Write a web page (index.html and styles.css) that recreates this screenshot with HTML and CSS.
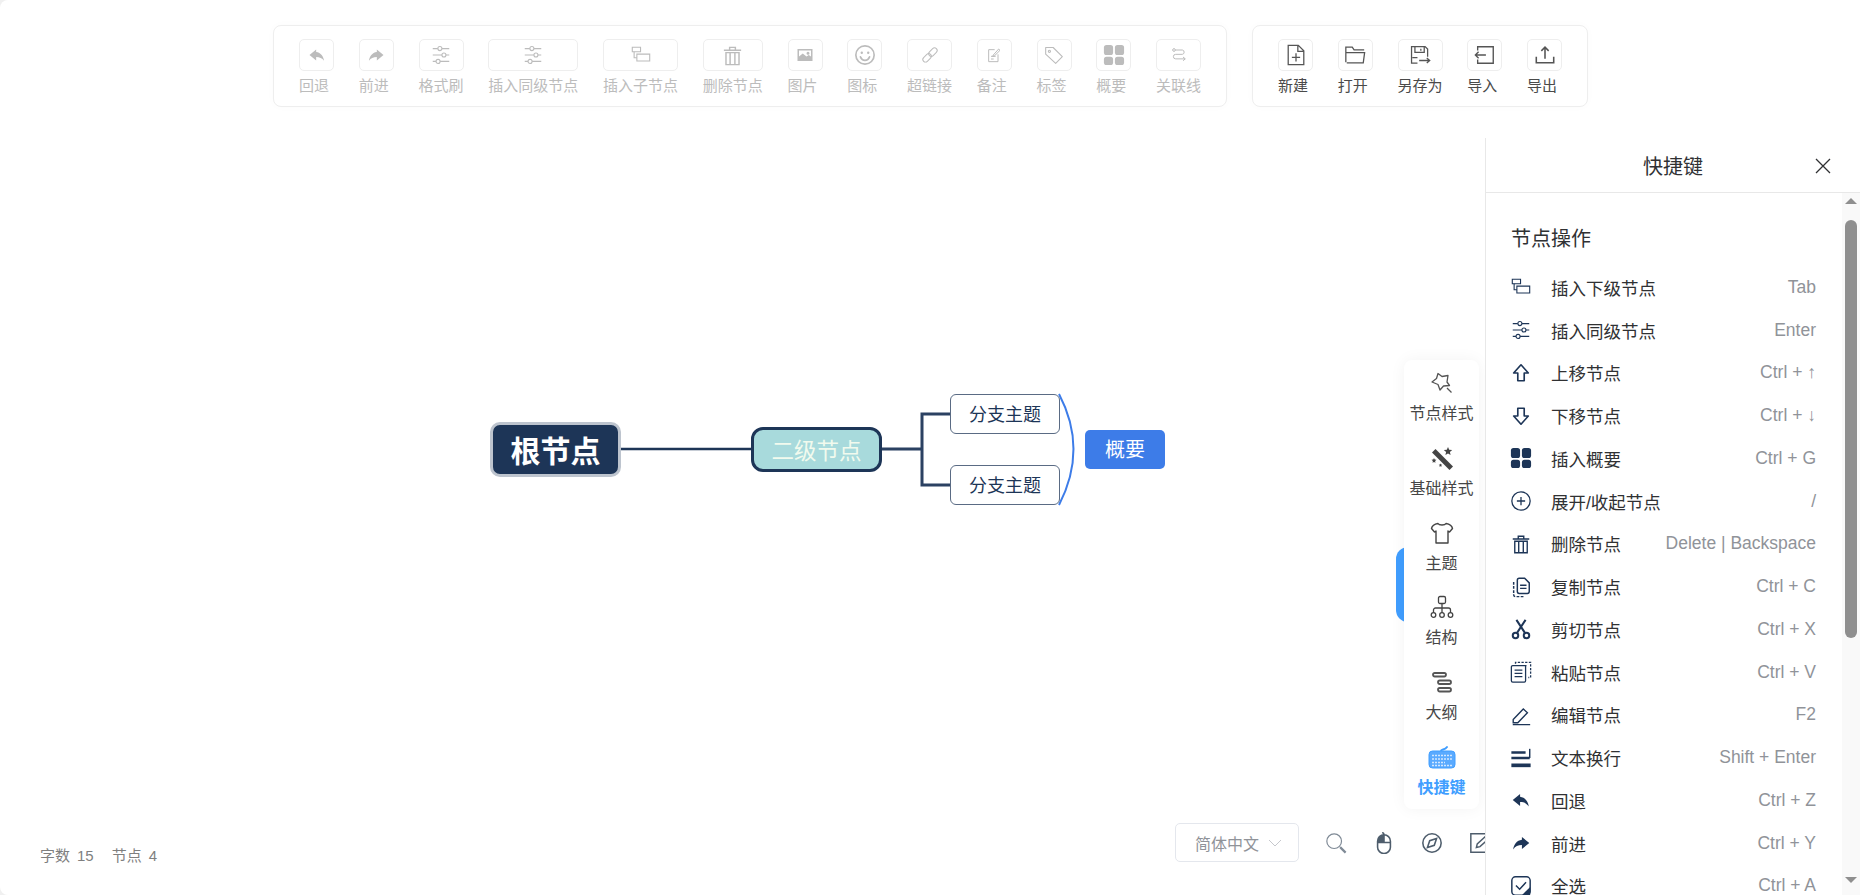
FILE: index.html
```html
<!DOCTYPE html>
<html lang="zh-CN">
<head>
  <meta charset="UTF-8" />
  <title>思绪思维导图</title>
  <link rel="stylesheet" href="styles.css">
</head>
<body>
  <!-- shared icons -->
  <svg class="defs" width="0" height="0">
    <symbol id="i-undo" viewBox="0 0 24 24"><path fill="currentColor" d="M11 5.500 3 12l8 6.500v-4.200c4.200 0 7.200 1.300 9.500 4.700-.7-5.200-3.800-9.800-9.500-10.500z"/></symbol>
    <symbol id="i-redo" viewBox="0 0 24 24"><path fill="currentColor" d="M13 5.500 21 12l-8 6.500v-4.200c-4.200 0-7.200 1.300-9.500 4.700.7-5.200 3.800-9.800 9.500-10.500z"/></symbol>
    <symbol id="i-sliders" viewBox="0 0 24 24"><g fill="none" stroke="currentColor" stroke-width="1.200"><path d="M3 5h5.500M13 5h8M3 12h10M17.500 12H21M3 19h3.500M11 19h10"/><circle cx="10.800" cy="5" r="2.200"/><circle cx="15.200" cy="12" r="2.200"/><circle cx="8.800" cy="19" r="2.200"/></g></symbol>
    <symbol id="i-child" viewBox="0 0 24 24"><g fill="none" stroke="currentColor" stroke-width="1.200"><path d="M2.500 3.500h9v5h-9zM7.500 11h14v7.500h-14z"/><path d="M4.500 8.500V15h3"/></g></symbol>
    <symbol id="i-trash" viewBox="0 0 24 24"><g fill="none" stroke="currentColor" stroke-width="1.500"><path d="M3 6.500h18M9 6V3.500h6V6M5.200 9h13.600v12.500H5.200zM9.500 9v12.500M14.500 9v12.500"/></g></symbol>
    <symbol id="i-grid" viewBox="0 0 24 24"><g fill="currentColor"><rect x="1" y="1" width="10" height="11" rx="2.800"/><rect x="13" y="1" width="10" height="11" rx="2.800"/><rect x="1" y="14" width="10" height="9" rx="2.800"/><rect x="13" y="14" width="10" height="9" rx="2.800"/></g></symbol>
    <symbol id="i-pencil" viewBox="0 0 24 24"><g fill="none" stroke="currentColor" stroke-width="1.500"><path d="M3.500 17 14.500 5.500l4.500 4L8.500 20.500h-5zM3 22.500h19"/></g></symbol>
  </svg>

  <div class="app">
    <!-- top toolbars -->
    <header class="toolbars">
      <div class="toolbar is-disabled">
        <div class="tool"><span class="tool-box"><svg class="ic-20"><use href="#i-undo"/></svg></span><span class="tool-label">回退</span></div>
        <div class="tool"><span class="tool-box"><svg class="ic-20"><use href="#i-redo"/></svg></span><span class="tool-label">前进</span></div>
        <div class="tool"><span class="tool-box"><svg class="ic-22"><use href="#i-sliders"/></svg></span><span class="tool-label">格式刷</span></div>
        <div class="tool"><span class="tool-box"><svg class="ic-22"><use href="#i-sliders"/></svg></span><span class="tool-label">插入同级节点</span></div>
        <div class="tool"><span class="tool-box"><svg class="ic-22"><use href="#i-child"/></svg></span><span class="tool-label">插入子节点</span></div>
        <div class="tool"><span class="tool-box"><svg class="ic-23"><use href="#i-trash"/></svg></span><span class="tool-label">删除节点</span></div>
        <div class="tool"><span class="tool-box">
          <svg class="ic-18" viewBox="0 0 24 24"><path fill="currentColor" fill-rule="evenodd" d="M2 4h20v16H2zM4 6v8l5-4 5 4 3-2 3 2V6zM16 7.500a2 2 0 1 1 0 4 2 2 0 0 1 0-4z"/></svg>
        </span><span class="tool-label">图片</span></div>
        <div class="tool"><span class="tool-box">
          <svg class="ic-22" viewBox="0 0 24 24"><g fill="none" stroke="currentColor" stroke-width="1.800"><circle cx="12" cy="12" r="10"/><path stroke-linecap="round" d="M7 14c1 2.600 3 3.800 5 3.800s4-1.200 5-3.800"/></g><circle cx="8.500" cy="9.500" r="1.300" fill="currentColor"/><circle cx="15.500" cy="9.500" r="1.300" fill="currentColor"/></svg>
        </span><span class="tool-label">图标</span></div>
        <div class="tool"><span class="tool-box">
          <svg class="ic-18" viewBox="0 0 24 24"><g fill="none" stroke="currentColor" stroke-width="1.300" transform="rotate(-45 12 12)"><rect x="0" y="8.500" width="13" height="7" rx="3.500"/><rect x="11" y="8.500" width="13" height="7" rx="3.500"/></g></svg>
        </span><span class="tool-label">超链接</span></div>
        <div class="tool"><span class="tool-box">
          <svg class="ic-16" viewBox="0 0 24 24"><g fill="none" stroke="currentColor" stroke-width="1.500"><path d="M13 4H4v18h14V11M7.500 14h7M7.500 18h4M11 12l8-9 2 2-8 8-3 1z"/></g></svg>
        </span><span class="tool-label">备注</span></div>
        <div class="tool"><span class="tool-box">
          <svg class="ic-20" viewBox="0 0 24 24"><g fill="none" stroke="currentColor" stroke-width="1.300" stroke-linejoin="round"><path d="M2 3h9l11 11-8 8L2 11z"/><circle cx="6.500" cy="7.500" r="1.300"/></g></svg>
        </span><span class="tool-label">标签</span></div>
        <div class="tool"><span class="tool-box"><svg class="ic-22"><use href="#i-grid"/></svg></span><span class="tool-label">概要</span></div>
        <div class="tool"><span class="tool-box">
          <svg class="ic-16" viewBox="0 0 24 24"><g fill="none" stroke="currentColor" stroke-width="1.500"><circle cx="4.500" cy="4.500" r="2"/><path d="M6.500 4.500H17a3.300 3.300 0 0 1 0 6.500H7a3.300 3.300 0 0 0 0 6.800h14M18 15l3.500 2.800-3.500 2.800"/></g></svg>
        </span><span class="tool-label">关联线</span></div>
      </div>

      <div class="toolbar">
        <div class="tool"><span class="tool-box">
          <svg class="ic-22" viewBox="0 0 24 24"><g fill="none" stroke="currentColor" stroke-width="1.400"><path d="M3.500 1.500h11l6 6v15h-17zM14 1.500V8h6.500M12 10v9M7.500 14.500h9"/></g></svg>
        </span><span class="tool-label">新建</span></div>
        <div class="tool"><span class="tool-box">
          <svg class="ic-22" viewBox="0 0 24 24"><g fill="none" stroke="currentColor" stroke-width="1.400"><path d="M2 20V3.500h7l2 3h11M2 9.500h20.500l-1.500 11H3"/></g></svg>
        </span><span class="tool-label">打开</span></div>
        <div class="tool"><span class="tool-box">
          <svg class="ic-22" viewBox="0 0 26 24"><g fill="none" stroke="currentColor" stroke-width="1.500"><path d="M10 21.500H3V2h16l3 3v9M7 2v7h11V2M14 4.500V7M4 15h6M12 18.500h12M21 15.500l3.500 3-3.500 3"/></g></svg>
        </span><span class="tool-label">另存为</span></div>
        <div class="tool"><span class="tool-box">
          <svg class="ic-22" viewBox="0 0 24 24"><g fill="none" stroke="currentColor" stroke-width="1.500"><path d="M4 7V3h17v18H4v-4M1.500 12H13M5 8.500 1.500 12 5 15.500"/></g></svg>
        </span><span class="tool-label">导入</span></div>
        <div class="tool"><span class="tool-box">
          <svg class="ic-22" viewBox="0 0 24 24"><g fill="none" stroke="currentColor" stroke-width="1.700"><path d="M2.500 14v6.500h19V14M12 16V3.500M8 7.500l4-4 4 4"/></g></svg>
        </span><span class="tool-label">导出</span></div>
      </div>
    </header>

    <!-- mind map canvas -->
    <main class="canvas">
      <svg class="links" width="1860" height="895">
        <path class="link" d="M621 449H751"/>
        <path class="link link-branch" d="M882 449H922M950 414H922V485H950"/>
        <path class="link-summary" d="M1059 394Q1088 449 1059 505"/>
      </svg>
      <div class="node node-root">根节点</div>
      <div class="node node-second">二级节点</div>
      <div class="node node-branch node-branch-a">分支主题</div>
      <div class="node node-branch node-branch-b">分支主题</div>
      <div class="node node-summary">概要</div>
    </main>

    <div class="count">
      <span class="count-item">字数<b>15</b></span>
      <span class="count-item">节点<b>4</b></span>
    </div>

    <!-- bottom controls -->
    <div class="nav-bar">
      <div class="lang-select">
        <span>简体中文</span>
        <svg class="chevron" viewBox="0 0 14 8"><path fill="none" stroke="currentColor" d="M1 1l6 6 6-6"/></svg>
      </div>
      <svg class="nav-icon" viewBox="0 0 24 24"><g fill="none" stroke="#7f8a96"><circle cx="10" cy="10" r="8" stroke-width="1.300"/><path stroke-width="2.400" d="M16.500 16.500l6 6"/></g></svg>
      <svg class="nav-icon" viewBox="0 0 24 24"><g fill="none" stroke="#4e5d6c" stroke-width="1.700"><path d="M5 10a7 7 0 0 1 14 0v6.500a7 7 0 0 1-14 0zM5 11.500h14M12 3v8.500M12 3c0-1-.5-2-2-2.500"/></g><path fill="#4e5d6c" d="M5 10a7 7 0 0 1 7-7v8.500H5z"/></svg>
      <svg class="nav-icon" viewBox="0 0 24 24"><g fill="none" stroke="#4e5d6c" stroke-width="1.700"><circle cx="12" cy="12" r="10"/><path d="M17 7l-2.500 7.500L7 17l2.500-7.500z"/></g></svg>
      <svg class="nav-icon" viewBox="0 0 24 24"><g fill="none" stroke="#4e5d6c" stroke-width="1.600"><path d="M20 2H2v20h20V12M8 17l1-4L20 3l3 3-11 10z"/></g></svg>
    </div>

    <!-- right sidebar tabs -->
    <span class="sidebar-tab"></span>
    <nav class="sidebar">
      <div class="side-item">
        <svg class="side-icon" viewBox="0 0 24 24"><g fill="none" stroke="#555" stroke-width="1.300" stroke-linejoin="round"><path d="M8 2.500l4 3 6-1-1 6.500 2.500 3.500-6 .5-3.500 4-2-5.500L2 11l4.500-3.500zM17 17l4.500 4.500"/></g></svg>
        <span>节点样式</span>
      </div>
      <div class="side-item">
        <svg class="side-icon" viewBox="0 0 24 24"><g fill="#444"><path d="M2 6.500 5.500 3 23 20.500 19.500 24z"/><path d="M18 1l1.200 2.800 3 .3-2.300 2 .7 3-2.600-1.600-2.600 1.600.7-3-2.300-2 3-.3zM4 12l.7 1.600 1.800.2-1.400 1.200.4 1.800L4 15.900l-1.500.9.400-1.800L1.500 13.800l1.800-.2zM10.500 17.500l.5 1.100 1.300.1-1 .9.300 1.200-1.100-.6-1.100.6.300-1.200-1-.9 1.300-.1z"/></g></svg>
        <span>基础样式</span>
      </div>
      <div class="side-item">
        <svg class="side-icon" viewBox="0 0 24 24"><path fill="none" stroke="#444" stroke-width="1.400" stroke-linejoin="round" d="M8 2.500c1 2 7 2 8 0 3 .5 6 2.500 6.500 5l-3 3.500-1.500-1v12H6V10l-1.500 1-3-3.500C2 5 5 3 8 2.500z"/></svg>
        <span>主题</span>
      </div>
      <div class="side-item">
        <svg class="side-icon" viewBox="0 0 24 24"><g fill="none" stroke="#444" stroke-width="1.300"><rect x="8.500" y="1.500" width="7" height="7" rx="1.500"/><path d="M12 8.500V18M3.500 18v-3a2 2 0 0 1 2-2h13a2 2 0 0 1 2 2v3"/><circle cx="3.500" cy="20" r="2.300"/><circle cx="12" cy="20" r="2.300"/><circle cx="20.500" cy="20" r="2.300"/></g></svg>
        <span>结构</span>
      </div>
      <div class="side-item">
        <svg class="side-icon" viewBox="0 0 24 24"><g fill="none" stroke="#555" stroke-width="1.800"><rect x="3" y="3" width="13" height="3.500" rx="1.700"/><rect x="8" y="10.500" width="13" height="3.500" rx="1.700"/><rect x="8" y="18" width="13" height="3.500" rx="1.700"/></g></svg>
        <span>大纲</span>
      </div>
      <div class="side-item is-active">
        <svg class="side-icon side-icon-wide" viewBox="0 0 28 24"><path fill="none" stroke="#409eff" stroke-width="2" stroke-linecap="round" d="M13 6c0-2 4-1 6-4"/><rect x="1" y="6" width="26" height="17" rx="3.500" fill="#5aaaff" stroke="#409eff"/><path stroke="#d3e8ff" stroke-width="1.600" stroke-dasharray="2 1" d="M4 10.500h20M4 14h20M4 17.500h13M4 20.500h20"/></svg>
        <span>快捷键</span>
      </div>
    </nav>

    <!-- shortcut panel -->
    <aside class="panel">
      <div class="panel-head">
        <span class="panel-title">快捷键</span>
        <svg class="panel-close" viewBox="0 0 16 16"><path fill="none" stroke="#303133" stroke-width="1.300" d="M1 1l14 14M15 1 1 15"/></svg>
      </div>
      <div class="panel-body">
        <div class="shortcut-list">
          <h3 class="section-title">节点操作</h3>
          <div class="shortcut"><svg class="row-icon"><use href="#i-child"/></svg><span class="shortcut-name">插入下级节点</span><span class="shortcut-key">Tab</span></div>
          <div class="shortcut"><svg class="row-icon"><use href="#i-sliders"/></svg><span class="shortcut-name">插入同级节点</span><span class="shortcut-key">Enter</span></div>
          <div class="shortcut"><svg class="row-icon" viewBox="0 0 24 24"><path fill="none" stroke="currentColor" stroke-width="1.800" stroke-linejoin="round" d="M12 3 4 12h4.500v8.500h7V12H20z"/></svg><span class="shortcut-name">上移节点</span><span class="shortcut-key">Ctrl + ↑</span></div>
          <div class="shortcut"><svg class="row-icon" viewBox="0 0 24 24"><path fill="none" stroke="currentColor" stroke-width="1.800" stroke-linejoin="round" d="M12 21 4 12h4.500V3.500h7V12H20z"/></svg><span class="shortcut-name">下移节点</span><span class="shortcut-key">Ctrl + ↓</span></div>
          <div class="shortcut"><svg class="row-icon"><use href="#i-grid"/></svg><span class="shortcut-name">插入概要</span><span class="shortcut-key">Ctrl + G</span></div>
          <div class="shortcut"><svg class="row-icon" viewBox="0 0 24 24"><g fill="none" stroke="currentColor" stroke-width="1.400"><circle cx="12" cy="12" r="10"/><path d="M12 7.500v9M7.500 12h9"/></g></svg><span class="shortcut-name">展开/收起节点</span><span class="shortcut-key">/</span></div>
          <div class="shortcut"><svg class="row-icon"><use href="#i-trash"/></svg><span class="shortcut-name">删除节点</span><span class="shortcut-key">Delete | Backspace</span></div>
          <div class="shortcut"><svg class="row-icon" viewBox="0 0 24 24"><g fill="none" stroke="currentColor" stroke-width="1.600"><path d="M8 4.500A2 2 0 0 1 10 2.500h6l5 5V17a2 2 0 0 1-2 2h-9a2 2 0 0 1-2-2zM11 10h7M11 13.500h7"/><path d="M4 6.500v14a2 2 0 0 0 2 2h9" stroke-dasharray="3 1.500"/></g></svg><span class="shortcut-name">复制节点</span><span class="shortcut-key">Ctrl + C</span></div>
          <div class="shortcut"><svg class="row-icon" viewBox="0 0 24 24"><g fill="none" stroke="currentColor" stroke-width="2.200"><circle cx="6" cy="19" r="3"/><circle cx="18" cy="19" r="3"/><path d="M7.500 16.500 17 2M16.500 16.500 7 2"/></g></svg><span class="shortcut-name">剪切节点</span><span class="shortcut-key">Ctrl + X</span></div>
          <div class="shortcut"><svg class="row-icon" viewBox="0 0 24 24"><g fill="none" stroke="currentColor" stroke-width="1.400"><path d="M18 5H3a1.500 1.500 0 0 0-1.500 1.500v15A1.500 1.500 0 0 0 3 23h12.500a1.500 1.500 0 0 0 1.500-1.500V5zM5 10h8.500M5 13.500h8.500M5 17h8.500"/><path d="M6 3V1.500h16.500V18H20" stroke-dasharray="2.500 1.500"/></g></svg><span class="shortcut-name">粘贴节点</span><span class="shortcut-key">Ctrl + V</span></div>
          <div class="shortcut"><svg class="row-icon"><use href="#i-pencil"/></svg><span class="shortcut-name">编辑节点</span><span class="shortcut-key">F2</span></div>
          <div class="shortcut"><svg class="row-icon" viewBox="0 0 24 24"><g fill="none" stroke="currentColor"><path stroke-width="2.500" d="M1.500 6h15.500M1.500 12h20"/><path stroke-width="4" d="M1.500 20h21"/><path stroke-width="1.600" d="M21.500 2v10"/></g></svg><span class="shortcut-name">文本换行</span><span class="shortcut-key">Shift + Enter</span></div>
          <div class="shortcut"><svg class="row-icon"><use href="#i-undo"/></svg><span class="shortcut-name">回退</span><span class="shortcut-key">Ctrl + Z</span></div>
          <div class="shortcut"><svg class="row-icon"><use href="#i-redo"/></svg><span class="shortcut-name">前进</span><span class="shortcut-key">Ctrl + Y</span></div>
          <div class="shortcut"><svg class="row-icon" viewBox="0 0 24 24"><rect x="2" y="2" width="20" height="20" rx="4" fill="none" stroke="currentColor" stroke-width="1.600"/><path fill="none" stroke="currentColor" stroke-width="1.600" d="M6.500 11.500l4 4 7-7.500"/><path fill="currentColor" d="M22 13v9h-9z"/></svg><span class="shortcut-name">全选</span><span class="shortcut-key">Ctrl + A</span></div>
        </div>
        <div class="scrollbar">
          <span class="scroll-arrow scroll-up"></span>
          <span class="scroll-thumb"></span>
          <span class="scroll-arrow scroll-down"></span>
        </div>
      </div>
    </aside>
  </div>
</body>
</html>
```

FILE: styles.css
```css
html, body { height: 100%; margin: 0; padding: 0; }
body {
  font-family: "Liberation Sans", "Noto Sans CJK SC", sans-serif;
  background: #f0f0f0;
  color: #303133;
  overflow: hidden;
}
.defs { position: absolute; }
.app { position: relative; height: 100vh; overflow: hidden; background: #fff; border-radius: 8px 0 0 8px; }

/* Toolbars */
.toolbars {
  display: flex;
  align-items: flex-start;
  gap: 25px;
  padding: 25px 0 0 273px;
  position: relative;
  z-index: 2;
}
.toolbar {
  display: flex;
  gap: 24.750px;
  padding: 13px 25px 10px;
  background: #fff;
  border: 1px solid #eee;
  border-radius: 8px;
  box-shadow: 0 0 10px rgba(0, 0, 0, 0.02);
  color: #555;
}
.tool { display: flex; flex-direction: column; align-items: flex-start; }
.tool-box {
  display: flex;
  align-items: center;
  justify-content: center;
  box-sizing: border-box;
  width: 100%;
  min-width: 35px;
  height: 32px;
  border: 1px solid #eee;
  border-radius: 5px;
}
.tool-label { margin-top: 5px; font-size: 15px; line-height: 20px; color: #4a4a4a; white-space: nowrap; }
.is-disabled { color: #bcbcbc; }
.is-disabled .tool-label { color: #bcbcbc; }
.ic-16 { width: 16px; height: 16px; }
.ic-18 { width: 18px; height: 18px; }
.ic-20 { width: 20px; height: 20px; }
.ic-22 { width: 22px; height: 22px; }
.ic-23 { width: 23px; height: 23px; }

/* Mind map canvas: nodes sit at free positions */
.canvas { position: absolute; inset: 0; }
.links { position: absolute; left: 0; top: 0; }
.link { fill: none; stroke: #1d3557; stroke-width: 2.5; }
.link-branch { stroke: #2b4162; stroke-width: 3; }
.link-summary { fill: none; stroke: #3d7ce8; stroke-width: 2; }
.node {
  position: absolute;
  box-sizing: border-box;
  display: flex;
  align-items: center;
  justify-content: center;
  padding-bottom: 2px;
  white-space: nowrap;
}
.node-root {
  left: 490px; top: 422px; width: 131px; height: 55px;
  background: #1d3557;
  border: 3px solid #bdc4ce;
  border-radius: 10px;
  color: #fff;
  font-size: 30px;
  font-weight: 700;
}
.node-second {
  left: 751px; top: 427px; width: 131px; height: 45px;
  background: #a8dadc;
  border: 3px solid #1d3557;
  border-radius: 12px;
  color: #f1faee;
  font-size: 22.5px;
}
.node-branch {
  left: 950px; width: 110px; height: 40px;
  background: #fff;
  border: 1.500px solid #5a6b84;
  border-radius: 6px;
  color: #1d3557;
  font-size: 18px;
}
.node-branch-a { top: 394px; }
.node-branch-b { top: 465px; }
.node-summary {
  left: 1085px; top: 430px; width: 80px; height: 39px;
  background: #3d7ce8;
  border-radius: 5px;
  color: #fff;
  font-size: 20px;
}

/* Word count */
.count {
  position: absolute;
  left: 40px;
  bottom: 28px;
  display: flex;
  gap: 18px;
  font-size: 15px;
  line-height: 22px;
  color: #7f7f7f;
}
.count b { font-weight: 400; margin-left: 7px; }

/* Bottom controls */
.nav-bar {
  position: absolute;
  left: 1175px;
  top: 823px;
  display: flex;
  align-items: center;
  gap: 26px;
  z-index: 1;
}
.lang-select {
  box-sizing: border-box;
  width: 124px;
  height: 39px;
  padding: 0 16px 0 19px;
  display: flex;
  align-items: center;
  justify-content: space-between;
  border: 1px solid #e4e7ed;
  border-radius: 5px;
  font-size: 16px;
  color: #909399;
}
.chevron { width: 14px; height: 8px; color: #c6c8cd; }
.nav-icon { width: 22px; height: 22px; }

/* Sidebar */
.sidebar-tab {
  position: absolute;
  left: 1396px;
  top: 547px;
  width: 30px;
  height: 75px;
  background: #409eff;
  border-radius: 12px;
}
.sidebar {
  position: absolute;
  left: 1404px;
  top: 360px;
  width: 75px;
  height: 449px;
  box-sizing: border-box;
  padding-top: 11px;
  display: flex;
  flex-direction: column;
  background: #fff;
  border-radius: 8px;
  box-shadow: 0 0 16px rgba(0, 0, 0, 0.05);
  z-index: 2;
}
.side-item {
  flex: none;
  height: 74.800px;
  display: flex;
  flex-direction: column;
  align-items: center;
  font-size: 16px;
  line-height: 22px;
  color: #464646;
  white-space: nowrap;
}
.side-icon { width: 24px; height: 24px; margin-bottom: 8px; }
.side-icon-wide { width: 28px; }
.is-active { color: #409eff; font-weight: 700; }

/* Shortcut panel */
.panel {
  position: absolute;
  left: 1485px;
  right: 0;
  top: 138px;
  bottom: 0;
  display: flex;
  flex-direction: column;
  background: #fff;
  border-left: 1px solid #e8e8e8;
  z-index: 3;
}
.panel-head {
  flex: none;
  height: 54px;
  display: flex;
  align-items: center;
  justify-content: center;
  position: relative;
  border-bottom: 1px solid #e8e8e8;
}
.panel-title { font-size: 20px; color: #303133; }
.panel-close { position: absolute; right: 29px; top: 20px; width: 16px; height: 16px; }
.panel-body { flex: 1; min-height: 0; display: flex; }
.shortcut-list { flex: 1; min-width: 0; padding: 0 26px 0 25px; overflow: hidden; }
.section-title {
  margin: 24px 0 5px;
  font-size: 20px;
  line-height: 44px;
  font-weight: 400;
  color: #303133;
}
.shortcut { display: flex; align-items: center; height: 42.750px; }
.row-icon { flex: none; width: 22px; height: 22px; margin: 0 19px 0 -1px; color: #1d3557; }
.shortcut-name { font-size: 17.500px; color: #303133; white-space: nowrap; }
.shortcut-key { margin-left: auto; font-size: 17.500px; color: #909399; white-space: nowrap; }

/* Scrollbar */
.scrollbar {
  flex: none;
  width: 18px;
  position: relative;
  background: #f9f9f9;
}
.scroll-thumb {
  position: absolute;
  left: 3px;
  top: 27px;
  width: 12px;
  height: 418px;
  background: #8f8f8f;
  border-radius: 6px;
}
.scroll-arrow { position: absolute; left: 3px; width: 0; height: 0; border: 6px solid transparent; }
.scroll-up { top: 5px; border-top: 0; border-bottom: 6px solid #8f8f8f; }
.scroll-down { bottom: 12px; border-bottom: 0; border-top: 6px solid #8f8f8f; }
```
